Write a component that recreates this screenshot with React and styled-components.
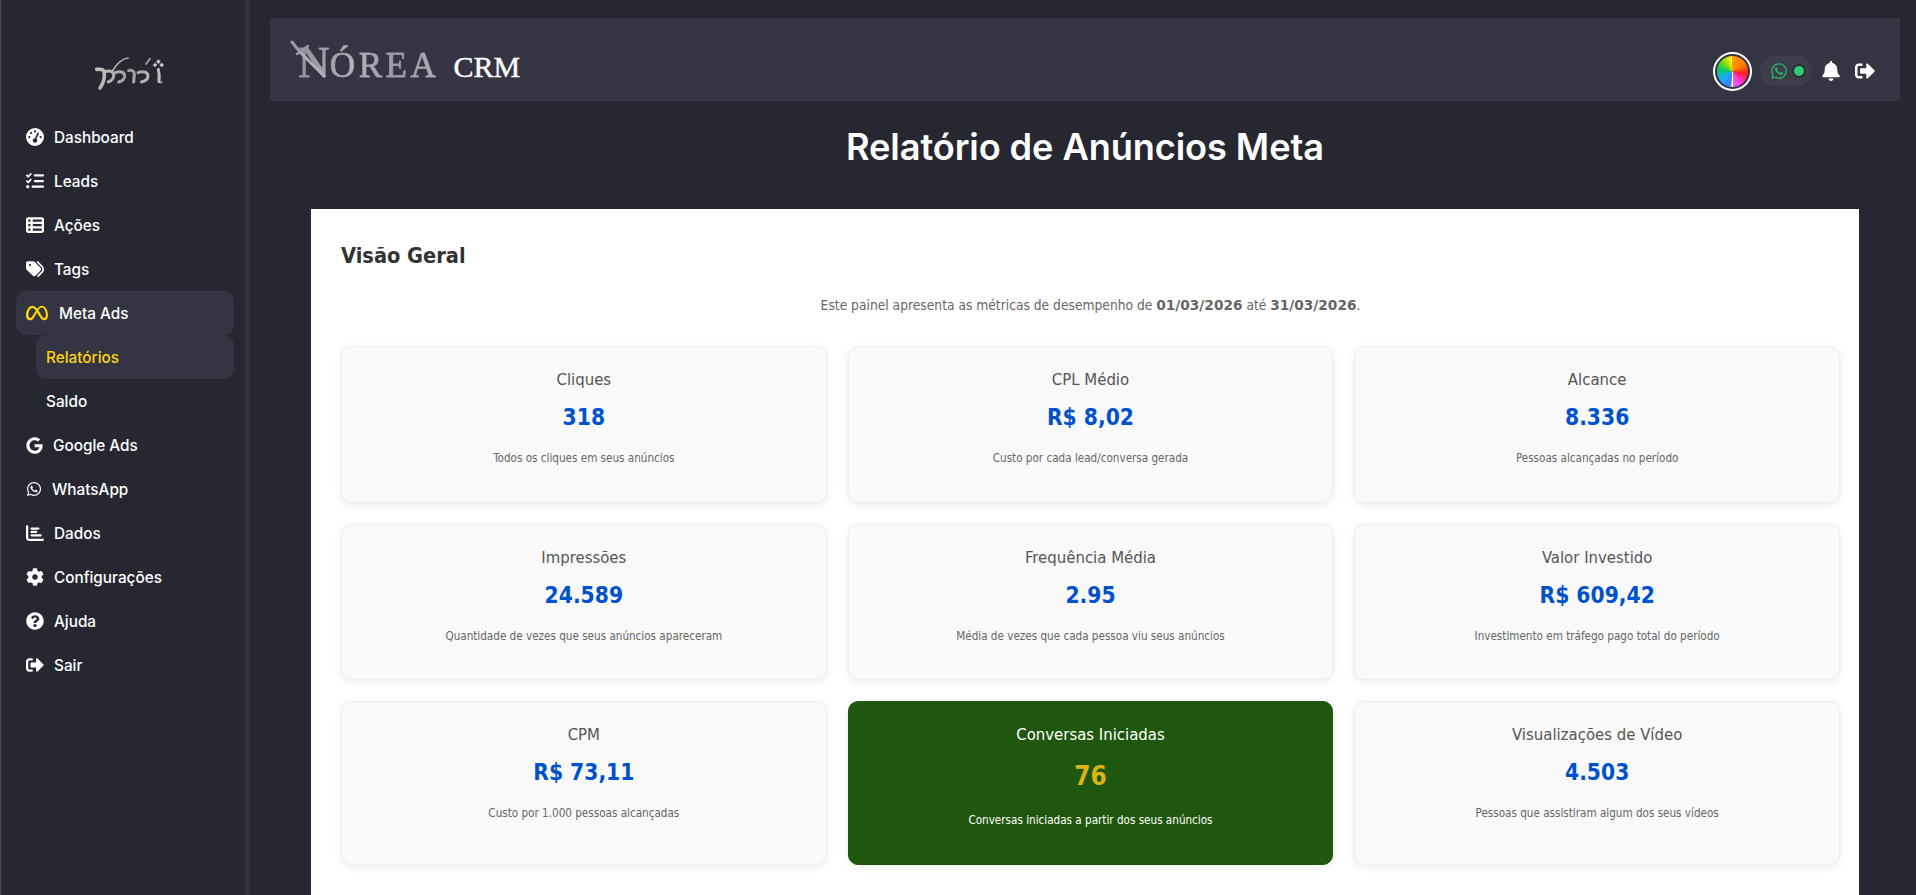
import React from "react";
import styled, { createGlobalStyle } from "styled-components";
import { FaGoogle, FaWhatsapp, FaCog, FaQuestionCircle, FaSignOutAlt, FaBell } from "react-icons/fa";
import { FaListCheck, FaChartBar, FaGaugeHigh, FaTableList, FaTags, FaMeta } from "react-icons/fa6";

const Global = createGlobalStyle`
  html, body { margin: 0; padding: 0; height: 100%; overflow: hidden; background: #272732; }
  * { box-sizing: border-box; }
`;
const Shell = styled.div`display: flex; height: 895px; overflow: hidden; background: #272732; font-family: Inter, sans-serif;`;
const Sidebar = styled.aside`
  width: 250px; flex: none; padding: 40px 11px 0 15px; display: flex; flex-direction: column;
  border-left: 1px solid #4a4a58; border-right: 5px solid #32323f;
`;
const LogoMark = styled.div`height: 75px; display: flex; justify-content: center; margin-left: 20px;`;
const TengwarSvg = styled.svg`filter: blur(0.35px);`;
const Nav = styled.nav`display: flex; flex-direction: column;`;
const Item = styled.a`
  height: 44px; display: flex; align-items: center; gap: ${p => p.$gap ?? 10}px; padding-left: 10px;
  margin-left: ${p => p.$sub ? 20 : 0}px; color: ${p => p.$accent ? "#ffd60a" : "#fff"}; font-size: 15.3px; font-weight: 450;
  background: ${p => p.$on ? "#343442" : "transparent"}; border-radius: ${p => p.$on ? "10px" : "0"};
  svg { flex: none; }
`;
const MetaGlyph = styled(FaMeta)`color: #ffd60a;`;
const Main = styled.main`flex: 1; min-width: 0; padding: 18px 16px 0 20px; display: flex; flex-direction: column;`;
const Header = styled.header`height: 83px; flex: none; background: #343442; display: flex; align-items: flex-start; justify-content: space-between; padding: 20px 25px 0 20px;`;
const Brand = styled.div`display: flex; align-items: baseline; padding-top: 3px; position: relative; width: 260px;`;
const BrandName = styled.span`
  font-family: "Liberation Serif", serif; font-size: 44px; line-height: 44px; margin-left: 8px;
  background: linear-gradient(100deg, #8c8c98 0%, #b4b4be 40%, #9a9aa4 70%, #b2b2bc 100%);
  -webkit-background-clip: text; background-clip: text; color: transparent; -webkit-text-stroke: .5px #a0a0aa;
  small { font-size: 35px; letter-spacing: 3.6px; }
`;
const BrandCrm = styled.span`font-family: "Liberation Serif", serif; font-size: 30px; color: #fff; margin-left: 14px; -webkit-text-stroke: .4px #fff;`;
const Sword = styled.svg`position: absolute; left: 0; top: 0;`;
const Actions = styled.div`display: flex; align-items: center; height: 42px; margin-top: 12px; color: #fff;`;
const Avatar = styled.div`
  width: 39px; height: 39px; border-radius: 50%; border: 2px solid #fff; padding: 2px;
  &::after { content: ""; display: block; width: 100%; height: 100%; border-radius: 50%;
    background: conic-gradient(#ff9f00, #ff7a00 60deg, #ff1f1f 100deg, #ff2fd0 140deg, #d86cff 178deg, #fff 180deg, #3f7cff 190deg, #17a8ff 230deg, #12c66b 280deg, #6bdc10 310deg, #f7e600 350deg, #fff 360deg); }
`;
const Status = styled.div`width: 52px; height: 30px; border-radius: 15px; background: #3d3d4b; margin-left: 8px; display: flex; align-items: center; gap: 6px; padding-left: 10px; color: #25b864;`;
const Dot = styled.span`width: 10px; height: 10px; border-radius: 50%; background: #2ecc71; box-shadow: 0 0 0 2px #2d2d3a;`;
const Bell = styled(FaBell)`margin-left: 9px;`;
const Out = styled(FaSignOutAlt)`margin-left: 14px;`;
const Title = styled.h1`margin: 24px 0 0; height: 84px; text-align: center; font-size: 36.2px; line-height: 45px; font-weight: 600; letter-spacing: -0.1px; color: #fff; flex: none;`;
const Panel = styled.section`
  flex: 1; margin: 0 41px; background: #fff; padding: 28px 19px 0 30px; font-family: "DejaVu Sans", Tahoma, sans-serif; font-stretch: condensed;
`;
const Heading = styled.h2`margin: 0; font-size: 21.6px; line-height: 38px; font-weight: 700; color: #333;`;
const Intro = styled.p`
  margin: 20px 0 0; text-align: center; font-size: 13.7px; line-height: 20px; color: #666;
  b { font-stretch: normal; font-size: 13.7px; }
`;
const Grid = styled.div`display: grid; grid-template-columns: repeat(3, 1fr); grid-template-rows: 157px 156px 164px; gap: 21px; margin-top: 31px;`;
const Card = styled.article`
  border-radius: 10px; border: 1px solid ${p => p.$hi ? "#1f570e" : "#eee"}; background: ${p => p.$hi ? "#1f570e" : "#f9f9f9"};
  box-shadow: 0 2px 8px rgba(0,0,0,.08); text-align: center; padding-top: 21px; color: ${p => p.$hi ? "#fff" : "#555"};
`;
const Label = styled.h3`margin: 0; font-size: 16.6px; line-height: 24px; font-weight: 400;`;
const Value = styled.div`
  margin-top: ${p => p.$hi ? 12 : 10}px; font-weight: 700; font-size: ${p => p.$hi ? 26 : 22.6}px; line-height: ${p => p.$hi ? 34 : 30}px;
  color: ${p => p.$hi ? "#dcb414" : "#0052cc"};
`;
const Desc = styled.p`margin: ${p => p.$hi ? 19 : 18}px 0 0; font-size: 11.6px; line-height: 16px; color: ${p => p.$hi ? "#fff" : "#666"};`;

const Tengwar = () => (
  <TengwarSvg width="110" height="60" viewBox="0 0 330 180" fill="none" stroke="url(#tg)" strokeLinecap="round">
    <defs><linearGradient id="tg" gradientUnits="userSpaceOnUse" x1="50" x2="250" y1="50" y2="140"><stop offset="0" stopColor="#c8c8c8"/><stop offset=".5" stopColor="#a0a0a0"/><stop offset="1" stopColor="#c8c8c8"/></linearGradient></defs>
    <path d="M50 88c8 0 20-2 22 6 3 16 1 32-12 50" strokeWidth="11"/>
    <path d="M74 96c12-6 26-3 27 8 1 10-6 18-16 22" strokeWidth="9"/>
    <path d="M98 92c12-20 26-36 46-38" strokeWidth="5"/>
    <path d="M106 98c12-6 28-3 28 10 0 10-8 15-18 18" strokeWidth="9"/>
    <path d="M146 92c10-3 17 2 17 10l-2 24" strokeWidth="9"/>
    <path d="M174 98c12-6 30-3 30 10 0 10-8 15-20 18" strokeWidth="9"/>
    <path d="M198 72l12-16" strokeWidth="5"/>
    <path d="M235 88c3 12 3 24 2 36" strokeWidth="9"/>
    <path d="M236 126c3 2 7 2 10 0" strokeWidth="4"/>
    <path d="M235 58l7 7-7 7-7-7zM225 68l7 7-7 7-7-7zM245 68l7 7-7 7-7-7z" fill="#c4c4c4" stroke="none"/>
  </TengwarSvg>
);

const metrics = [
  ["Cliques", "318", "Todos os cliques em seus anúncios"],
  ["CPL Médio", "R$ 8,02", "Custo por cada lead/conversa gerada"],
  ["Alcance", "8.336", "Pessoas alcançadas no período"],
  ["Impressões", "24.589", "Quantidade de vezes que seus anúncios apareceram"],
  ["Frequência Média", "2.95", "Média de vezes que cada pessoa viu seus anúncios"],
  ["Valor Investido", "R$ 609,42", "Investimento em tráfego pago total do período"],
  ["CPM", "R$ 73,11", "Custo por 1.000 pessoas alcançadas"],
  ["Conversas Iniciadas", "76", "Conversas iniciadas a partir dos seus anúncios", true],
  ["Visualizações de Vídeo", "4.503", "Pessoas que assistiram algum dos seus vídeos"],
];

export default function App() {
  return (
    <Shell>
      <Global />
      <Sidebar>
        <LogoMark><Tengwar /></LogoMark>
        <Nav>
          <Item><FaGaugeHigh size={18} />Dashboard</Item>
          <Item><FaListCheck size={18} />Leads</Item>
          <Item><FaTableList size={18} />Ações</Item>
          <Item><FaTags size={18} />Tags</Item>
          <Item $on $gap={11}><MetaGlyph size={22} />Meta Ads</Item>
          <Item $on $sub $accent>Relatórios</Item>
          <Item $sub>Saldo</Item>
          <Item $gap={10}><FaGoogle size={17} />Google Ads</Item>
          <Item $gap={10}><FaWhatsapp size={16} />WhatsApp</Item>
          <Item><FaChartBar size={18} />Dados</Item>
          <Item><FaCog size={18} />Configurações</Item>
          <Item><FaQuestionCircle size={18} />Ajuda</Item>
          <Item><FaSignOutAlt size={18} />Sair</Item>
        </Nav>
      </Sidebar>
      <Main>
        <Header>
          <Brand>
            <Sword width="46" height="46" viewBox="0 0 46 46" fill="none">
              <path d="M2 4l8 10" stroke="#9c9ca6" strokeWidth="3" strokeLinecap="round"/>
              <path d="M7 16l11-8" stroke="#9c9ca6" strokeWidth="2.400" strokeLinecap="round"/>
              <path d="M10 14l25 25" stroke="#b0b0ba" strokeWidth="3"/>
            </Sword>
            <BrandName>N<small>ÓREA</small></BrandName>
            <BrandCrm>CRM</BrandCrm>
          </Brand>
          <Actions>
            <Avatar />
            <Status><FaWhatsapp size={18} /><Dot /></Status>
            <Bell size={20} />
            <Out size={20} />
          </Actions>
        </Header>
        <Title>Relatório de Anúncios Meta</Title>
        <Panel>
          <Heading>Visão Geral</Heading>
          <Intro>Este painel apresenta as métricas de desempenho de <b>01/03/2026</b> até <b>31/03/2026</b>.</Intro>
          <Grid>
            {metrics.map(([l, v, d, hi]) => (
              <Card key={l} $hi={hi}>
                <Label>{l}</Label>
                <Value $hi={hi}>{v}</Value>
                <Desc $hi={hi}>{d}</Desc>
              </Card>
            ))}
          </Grid>
        </Panel>
      </Main>
    </Shell>
  );
}
